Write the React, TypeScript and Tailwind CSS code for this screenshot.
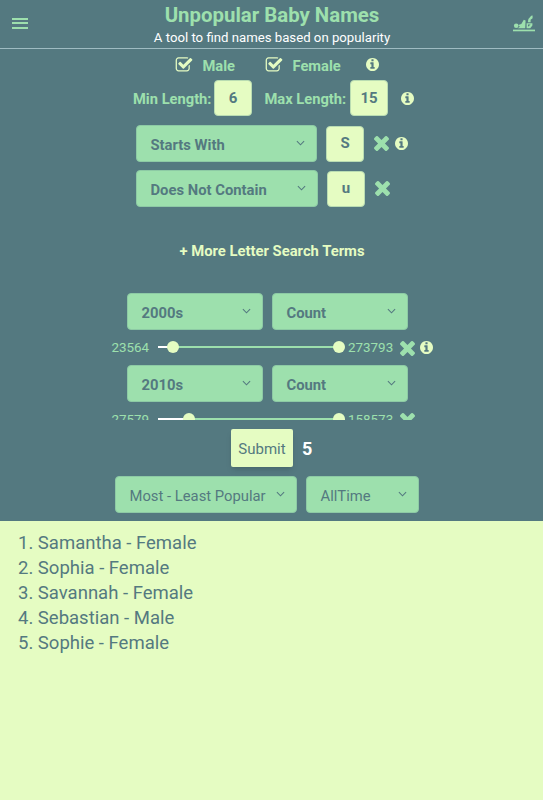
const CloseIcon = ({ className = '' }: { className?: string }) => (
  <svg viewBox="302 366 1188 1188" fill="currentColor" className={`w-[15px] h-[15px] text-[#9de0ad] shrink-0 ${className}`}>
    <path d="M1490 1322q0 40-28 68l-136 136q-28 28-68 28t-68-28l-294-294-294 294q-28 28-68 28t-68-28l-136-136q-28-28-28-68t28-68l294-294-294-294q-28-28-28-68t28-68l136-136q28-28 68-28t68 28l294 294 294-294q28-28 68-28t68 28l136 136q28 28 28 68t-28 68l-294 294 294 294q28 28 28 68z" />
  </svg>
);

const CheckIcon = () => (
  <svg viewBox="0 0 1792 1792" fill="currentColor" className="w-[18px] h-[18px] text-[#e5fcc2] shrink-0">
    <path d="M1472 930v318q0 119-84.5 203.5t-203.5 84.5h-832q-119 0-203.5-84.5t-84.5-203.5v-832q0-119 84.5-203.5t203.5-84.5h832q63 0 117 25 15 7 18 23 3 17-9 29l-49 49q-10 10-23 10-3 0-9-2-23-6-45-6h-832q-66 0-113 47t-47 113v832q0 66 47 113t113 47h832q66 0 113-47t47-113v-254q0-13 9-22l64-64q10-10 23-10 6 0 12 3 20 8 20 29zm231-489l-814 814q-24 24-57 24t-57-24l-430-430q-24-24-24-57t24-57l110-110q24-24 57-24t57 24l263 263 647-647q24-24 57-24t57 24l110 110q24 24 24 57t-24 57z" />
  </svg>
);

const Info = ({ className = '' }: { className?: string }) => (
  <svg viewBox="128 128 1536 1536" fill="currentColor" className={`w-[13px] h-[13px] text-[#e5fcc2] shrink-0 ${className}`}>
    <path d="M1152 1376v-160q0-14-9-23t-23-9h-96v-512q0-14-9-23t-23-9h-320q-14 0-23 9t-9 23v160q0 14 9 23t23 9h96v320h-96q-14 0-23 9t-9 23v160q0 14 9 23t23 9h448q14 0 23-9t9-23zm-128-896v-160q0-14-9-23t-23-9h-192q-14 0-23 9t-9 23v160q0 14 9 23t23 9h192q14 0 23-9t9-23zm640 416q0 209-103 385.5t-279.5 279.5-385.5 103-385.5-103-279.5-279.5-103-385.5 103-385.5 279.5-279.5 385.5-103 385.5 103 279.5 279.5 103 385.5z" />
  </svg>
);

const BabyIcon = () => (
  <svg viewBox="0 0 22 18" className="w-[22px] h-[18px] text-[#9de0ad]" fill="currentColor">
    <circle cx="3.2" cy="11.8" r="2.3" />
    <path d="M5.2 11 L8.3 10 L10.8 5.8 L12.6 6.6 L12.2 14.2 H4.6 L6.8 12.8 Z" />
    <path d="M13.6 9.2 H19.4 V11.6 L17.2 14.2 H13.6 Z M15 10.6 V12.8 L17.6 10.6 Z" fillRule="evenodd" />
    <path d="M14.8 8.3 L15.4 4.9 L18.2 1.8 L19.6 1.6 V4.2 L17.6 5.8 L17.6 8.3 Z" />
    <rect x="0" y="15.6" width="22" height="1.7" />
  </svg>
);

const Chevron = () => (
  <svg viewBox="0 0 10 6" fill="none" className="w-[9px] h-[6px] mb-px shrink-0">
    <path d="M1 1 L5 5 L9 1" stroke="currentColor" strokeWidth="1.2" />
  </svg>
);

const Select = ({ label, className = '' }: { label: string; className?: string }) => (
  <button
    className={`flex items-center justify-between h-[37px] pl-[13.5px] pr-[11px] rounded-[4px] bg-[#9de0ad] border border-[#8dcaa5] text-[#547980] text-[14.8px] ${className}`}
  >
    <span className="pt-[3px] whitespace-nowrap">{label}</span>
    <Chevron />
  </button>
);

const Box = ({ value, className = '' }: { value: string; className?: string }) => (
  <div
    className={`flex items-center justify-center w-[38px] h-[36px] rounded-[4px] bg-[#e5fcc2] border border-[#b9dcb2] text-[#547980] text-[15px] font-bold shrink-0 ${className}`}
  >
    {value}
  </div>
);

type RangeProps = {
  min: string;
  max: string;
  start: number;
  info?: boolean;
};

const Range = ({ min, max, start, info = false }: RangeProps) => (
  <div className="flex items-center h-[18px] pl-[111.5px] text-[13.4px] text-[#9de0ad]">
    <span className="w-[46.5px] pt-px">{min}</span>
    <div className="relative w-[181px] h-[2px] mb-[2px] bg-[#9de0ad]">
      <div className="absolute left-0 top-0 h-[2px] bg-white" style={{ width: start }} />
      <div className="absolute -top-[5px] w-[12px] h-[12px] rounded-full bg-[#e5fcc2]" style={{ left: start - 6 }} />
      <div className="absolute -top-[5px] right-[-6px] w-[12px] h-[12px] rounded-full bg-[#e5fcc2]" />
    </div>
    <span className="ml-[9px] w-[52px] pt-px">{max}</span>
    <CloseIcon />
    {info && <Info className="ml-[5px] mb-px" />}
  </div>
);

const results = [
  'Samantha - Female',
  'Sophia - Female',
  'Savannah - Female',
  'Sebastian - Male',
  'Sophie - Female',
];

const App = () => {
  return (
    <div className="w-full h-screen overflow-hidden bg-[#e5fcc2] font-[Roboto,sans-serif]">
      <div className="h-[520.5px] bg-[#547980]">
        {/* Header */}
        <header className="flex justify-between h-[49px] pl-3 pr-2 border-b border-[#9fbcc2]">
          <div className="flex flex-col gap-[2.5px] w-4 mt-[17.5px]">
            <div className="h-[2px] bg-[#9de0ad]" />
            <div className="h-[2px] bg-[#9de0ad]" />
            <div className="h-[2px] bg-[#9de0ad]" />
          </div>
          <div className="ml-[3px] text-center">
            <h1 className="mt-[3px] text-[20.4px] leading-6 font-bold text-[#9de0ad]">Unpopular Baby Names</h1>
            <p className="mt-[3px] text-[13.2px] leading-4 text-white">A tool to find names based on popularity</p>
          </div>
          <div className="mt-[14px]">
            <BabyIcon />
          </div>
        </header>

        {/* Filters */}
        <div className="h-[371px] overflow-hidden text-[#9de0ad] text-[14.7px]">
          <div className="flex items-center h-[31px] pl-[175px] font-bold">
            <CheckIcon />
            <span className="ml-[9.5px] w-[62.5px] pt-[3px]">Male</span>
            <CheckIcon />
            <span className="ml-[9.5px] w-[73.5px] pt-[3px]">Female</span>
            <Info />
          </div>
          <div className="flex items-center h-[36px] pl-[133px] font-bold">
            <span className="w-[81px] pt-[3px]">Min Length:</span>
            <Box value="6" />
            <span className="ml-[12.5px] w-[85.5px] pt-[3px]">Max Length:</span>
            <Box value="15" />
            <Info className="ml-[13px]" />
          </div>
          <div className="flex items-center h-[37px] mt-[9px] pl-[136px]">
            <Select label="Starts With" className="w-[181px] font-bold" />
            <Box value="S" className="ml-[9px]" />
            <CloseIcon className="ml-[10px]" />
            <Info className="ml-[6px]" />
          </div>
          <div className="flex items-center h-[37px] mt-[8px] pl-[136px]">
            <Select label="Does Not Contain" className="w-[182px] font-bold" />
            <Box value="u" className="ml-[9px]" />
            <CloseIcon className="ml-[10px]" />
          </div>
          <p className="mt-[34px] pl-px text-center text-[14.8px] leading-5 font-bold text-[#e5fcc2]">
            + More Letter Search Terms
          </p>
          <div className="flex gap-[9px] mt-[32px] pl-[127px] font-bold">
            <Select label="2000s" className="w-[136px]" />
            <Select label="Count" className="w-[136px]" />
          </div>
          <div className="mt-[9px]">
            <Range min="23564" max="273793" start={15} info />
          </div>
          <div className="flex gap-[9px] mt-[8px] pl-[127px] font-bold">
            <Select label="2010s" className="w-[136px]" />
            <Select label="Count" className="w-[136px]" />
          </div>
          <div className="mt-[9px]">
            <Range min="27579" max="158573" start={31} />
          </div>
        </div>

        {/* Submit and sorting */}
        <div className="flex items-center h-[38px] mt-[9px] pl-[231px]">
          <button className="w-[62px] h-[38px] pt-[2px] rounded-[2px] bg-[#e5fcc2] text-[#547980] text-[15px] shadow-md">
            Submit
          </button>
          <span className="ml-[9px] pt-[2px] text-lg font-bold text-white">5</span>
        </div>
        <div className="flex gap-[9px] mt-[9px] pl-[115px]">
          <Select label="Most - Least Popular" className="w-[182px]" />
          <Select label="AllTime" className="w-[113px]" />
        </div>
      </div>

      {/* Results */}
      <ol className="pt-[10.5px] pl-[18px] text-[18.5px] leading-[25px] text-[#547980]">
        {results.map((name, index) => (
          <li key={name}>{`${index + 1}. ${name}`}</li>
        ))}
      </ol>
    </div>
  );
};

export default App;
